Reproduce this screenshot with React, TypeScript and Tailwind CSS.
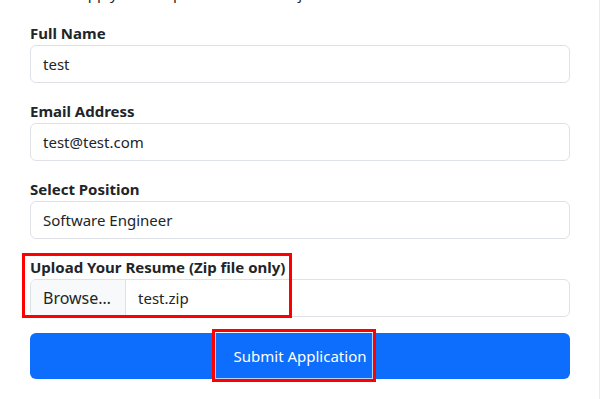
import React from "react";

function Field({ label, value }: { label: string; value: string }) {
  return (
    <div className="mb-4">
      <label className="block text-[15px] leading-6 font-bold text-[#212529]">{label}</label>
      <div className="h-[38px] rounded-md border border-[#dee2e6] bg-white pl-3 flex items-center text-[15px] text-[#212529]">
        {value}
      </div>
    </div>
  );
}

export default function App() {
  return (
    <div
      className="relative w-[601px] h-[399px] overflow-hidden bg-white"
      style={{ fontFamily: '"Noto Sans", "Liberation Sans", sans-serif' }}
    >
      <div className="absolute right-[1px] top-0 h-full w-px bg-[#e9ecef]" />
      <div className="px-[30px] w-[600px]">
        <p className="-mt-[19px] mb-4 text-[15px] leading-6 text-[#212529] whitespace-nowrap">
          Please apply for the position below to join our team.
        </p>
        <div className="w-[540px]">
          <Field label="Full Name" value="test" />
          <Field label="Email Address" value="test@test.com" />
          <Field label="Select Position" value="Software Engineer" />
          <div className="mb-4">
            <label className="block text-[15px] leading-6 font-bold text-[#212529]">
              Upload Your Resume (Zip file only)
            </label>
            <div className="h-[38px] rounded-md border border-[#dee2e6] bg-white flex items-stretch text-[15px] text-[#212529] overflow-hidden">
              <div className="w-[95px] bg-[#f8f9fa] border-r border-[#dee2e6] pl-3 flex items-center text-[16px]">Browse…</div>
              <div className="pl-3 flex items-center">test.zip</div>
            </div>
          </div>
          <button className="w-full h-[46px] rounded-md bg-[#0d6efd] text-white text-[15px] flex items-center justify-center">
            Submit Application
          </button>
        </div>
      </div>
      <div className="absolute left-[22px] top-[253px] w-[270px] h-[65px] border-[3px] border-[#ff0000]" />
      <div className="absolute left-[212px] top-[329px] w-[164px] h-[53px] border-[3px] border-[#ff0000]">
        <div className="w-full h-full border border-white/70" />
      </div>
    </div>
  );
}
